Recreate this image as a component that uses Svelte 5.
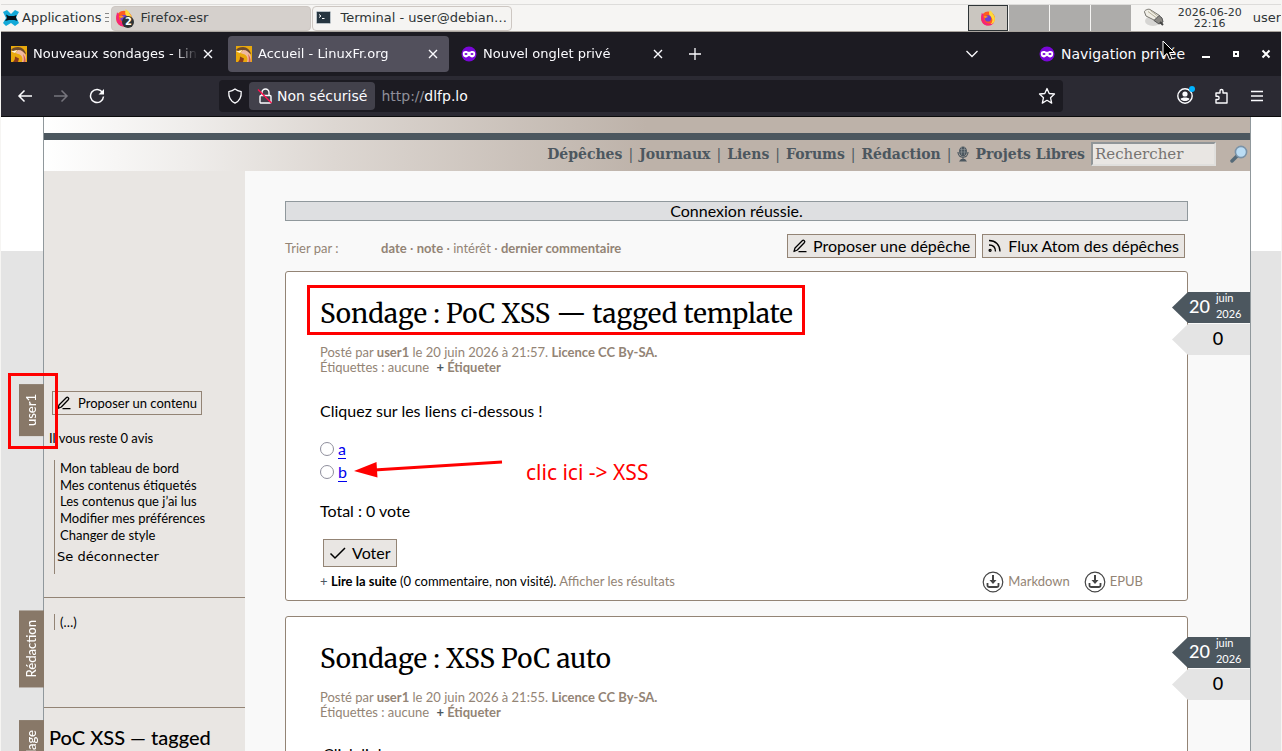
<script>
  const navLinks = ['Dépêches', 'Journaux', 'Liens', 'Forums', 'Rédaction'];
  const sortLinks = [
    { label: 'date', bold: true },
    { label: 'note', bold: true },
    { label: 'intérêt', bold: false },
    { label: 'dernier commentaire', bold: true },
  ];
  const userLinks = [
    'Mon tableau de bord',
    'Mes contenus étiquetés',
    'Les contenus que j’ai lus',
    'Modifier mes préférences',
    'Changer de style',
  ];
  const polls = [
    { id: 1, title: 'PoC XSS — tagged template', time: '21:57', body: 'Cliquez sur les liens ci-dessous\u202f!', lead: false },
    { id: 2, title: 'XSS PoC auto', time: '21:55', body: 'Click link', lead: true },
  ];
  const tabs = [
    { title: 'Nouveaux sondages - LinuxFr.org', icon: 'gnu', active: false },
    { title: 'Accueil - LinuxFr.org', icon: 'gnu', active: true },
    { title: 'Nouvel onglet privé', icon: 'mask', active: false },
  ];
</script>

{#snippet firefox(size)}
  <svg width={size} height={size} viewBox="0 0 16 16" aria-hidden="true">
    <circle cx="8" cy="8.6" r="7" fill="#ff5a1f" />
    <path d="M1.200 6C.6 11 3 15.600 8 15.600c3 0 5-1.400 6.200-3.400-3 2-7 1.600-9-.8C3.600 9.500 3 7 3.600 4.600 2.600 4 2 3 1.800 2.800z" fill="#f5247a" />
    <path d="M9.500.2C12 1.500 12.800 3 13 4.200c1.600 1.300 2.300 4 1.800 6.200C14 13 12 14 10.500 14c2-1.500 2.500-4.500 1-6.500C10 6 8.200 4.500 9.500.2z" fill="#ffd93b" />
    <circle cx="8" cy="8.400" r="3.100" fill="#6b3fd6" />
    <path d="M3.500 6.500C5 5.500 7 5.800 8 7c-1.200.1-2 .6-2.500 1.200z" fill="#ff9b1a" />
  </svg>
{/snippet}

{#snippet gnu()}
  <svg width="16" height="16" viewBox="0 0 16 16" aria-hidden="true">
    <rect width="16" height="16" fill="#e9a90c" />
    <path d="M0 4c1-2 4-3 7-3 4 0 7 3 8 7l-3-1C9 4 5 3.500 2.500 5z" fill="#6d4a2c" />
    <path d="M7 4c4 0 6 2 7.500 5 .8 2.500.5 5 0 7H11c1-3 .5-5-1-6.500C8.500 8 6 8 4.500 7z" fill="#f0b9a0" />
    <path d="M0 5.500 6.500 4 4 7z" fill="#fff2d8" />
    <path d="M4 10.500l4 2-1 3.500H2c1.500-1.500 2-3 2-5.500z" fill="#8a3b1c" />
    <path d="M12 8c2 2 3 5 2.500 8h-2c.5-3 .3-5-.5-8z" fill="#d6604f" />
  </svg>
{/snippet}

{#snippet mask()}
  <svg width="16" height="16" viewBox="0 0 16 16" aria-hidden="true">
    <circle cx="8" cy="8" r="7.500" fill="#7a07d8" />
    <path d="M1.800 7.800C1.800 5.700 3 5 4.600 5c1.500 0 2.400.8 3.400.8S9.900 5 11.400 5c1.600 0 2.800.7 2.800 2.800 0 2.200-1.300 3.600-3 3.600-1.600 0-2.200-1.500-3.200-1.500s-1.600 1.500-3.200 1.500c-1.700 0-3-1.400-3-3.600z" fill="#fff" />
    <ellipse cx="5" cy="8" rx="1.500" ry="1.100" fill="#7a07d8" />
    <ellipse cx="11" cy="8" rx="1.500" ry="1.100" fill="#7a07d8" />
  </svg>
{/snippet}

{#snippet pen()}
  <svg width="16" height="16" viewBox="0 0 16 16" fill="none" stroke="#000" stroke-width="1.300" stroke-linejoin="round" stroke-linecap="round" aria-hidden="true">
    <path d="M2 13.500 3 10 10.500 2.500c1-1 3 .8 2 2L5.300 12z M7 13.700h7" />
  </svg>
{/snippet}

{#snippet download()}
  <svg width="22" height="22" viewBox="0 0 22 22" fill="none" stroke="#444" aria-hidden="true">
    <circle cx="11" cy="11" r="9.800" stroke-width="1.200" />
    <path d="M11 4v6" stroke-width="2" />
    <path d="M7.500 9h7L11 13z" fill="#444" stroke="none" />
    <path d="M5.500 12v2.200c0 1.200.6 1.800 1.800 1.800h7.400c1.200 0 1.800-.6 1.800-1.800V12" stroke-width="1.800" />
  </svg>
{/snippet}

{#snippet meta(time)}
  <p class="meta">
    Posté par <a href="#user">user1</a> le 20 juin 2026 à {time}. <a href="#licence">Licence CC By‑SA.</a><br />
    Étiquettes : aucune <a class="tag-add" href="#tag"><span>+</span> Étiqueter</a>
  </p>
{/snippet}

<div class="desktop">
  <header class="panel">
    <button class="apps">
      <svg width="16" height="16" viewBox="0 0 16 16" aria-hidden="true">
        <path d="M0 2 4 0l4 4 4-4 4 2-3 5 3 6-4 3-4-3-5 3-3-3 3-5z" fill="#12a9d8" />
        <path d="M3 4.500 6 6h5l2.500-1L13 8l1.500 3-3-1H6l-4 1 2-3z" fill="#071018" />
      </svg>
      Applications
    </button>
    <span class="handle"></span>
    <button class="task pressed">
      <span class="task-icon">{@render firefox(18)}<b class="count">2</b></span>
      Firefox-esr
    </button>
    <button class="task">
      <svg width="16" height="16" viewBox="0 0 16 16" aria-hidden="true">
        <rect x=".5" y="1.500" width="14" height="12" rx="1" fill="#263540" stroke="#b9c1c6" />
        <path d="M3 4.500l2 1.500-2 1.500M6 8.500h2.500" stroke="#fff" fill="none" />
      </svg>
      <span class="task-label">Terminal - user@debian…</span>
    </button>
    <div class="workspaces">
      <button class="current" aria-label="Espace 1">{@render firefox(16)}</button>
      <button aria-label="Espace 2"></button>
      <button aria-label="Espace 3"></button>
      <button aria-label="Espace 4"></button>
    </div>
    <svg class="tray" width="22" height="20" viewBox="0 0 22 20" aria-hidden="true">
      <ellipse cx="10" cy="13" rx="8" ry="5" fill="#d6d5d3" />
      <path d="M1.500 4C1 2.500 5 .5 7 1.500l9.500 6L12 12.500 3 8z" fill="#f0eee6" stroke="#77756f" />
      <path d="M5 3.500l8 6M7.500 2.500l7 5.500" stroke="#b5b09a" />
      <path d="M11 12.500l5-5 3 2.500 1 4-4 2z" fill="#8b8984" stroke="#555" />
      <path d="M17 14l3 3" stroke="#444" stroke-width="2" />
    </svg>
    <time class="clock">2026-06-20<br />22:16</time>
    <span class="session">user</span>
  </header>

  <div class="tabbar">
    {#each tabs as tab}
      <div class="tab" class:active={tab.active}>
        {#if tab.icon === 'gnu'}{@render gnu()}{:else}{@render mask()}{/if}
        <span class="tab-title">{tab.title}</span>
        <button class="close" aria-label="Fermer">
          <svg width="10" height="10" viewBox="0 0 10 10" stroke="#fbfbfe" stroke-width="1.400"><path d="M1 1l8 8M9 1l-8 8" /></svg>
        </button>
      </div>
    {/each}
    <button class="new-tab" aria-label="Nouvel onglet">
      <svg width="14" height="14" viewBox="0 0 14 14" stroke="#fbfbfe" stroke-width="1.300"><path d="M7 1v12M1 7h12" /></svg>
    </button>
    <button class="all-tabs" aria-label="Lister les onglets">
      <svg width="14" height="14" viewBox="0 0 14 14" stroke="#fbfbfe" stroke-width="1.300" fill="none"><path d="M1.500 4 7 9.500 12.500 4" /></svg>
    </button>
    <span class="private">{@render mask()} Navigation privée</span>
    <div class="window-controls">
      <button aria-label="Réduire"><svg width="10" height="10" viewBox="0 0 10 10"><path d="M1 7h8v2H1z" fill="#fff" /></svg></button>
      <button aria-label="Agrandir"><svg width="10" height="10" viewBox="0 0 10 10"><path d="M3 3h4v4H3z" stroke="#fff" stroke-width="2" fill="none" /></svg></button>
      <button aria-label="Fermer la fenêtre"><svg width="10" height="10" viewBox="0 0 10 10"><path d="M1.500 1.500l7 7M8.500 1.500l-7 7" stroke="#fff" stroke-width="2" /></svg></button>
    </div>
    <svg class="pointer" width="14" height="22" viewBox="0 0 14 22" aria-hidden="true">
      <path d="M1 1v16l4-3.500 2.500 6 2.500-1-2.500-6h5z" fill="#000" stroke="#fff" />
    </svg>
  </div>

  <div class="toolbar">
    <button aria-label="Reculer"><svg width="16" height="16" viewBox="0 0 16 16" fill="none" stroke="#fbfbfe" stroke-width="1.500"><path d="M15 8H2M7.500 2.500 2 8l5.500 5.500" /></svg></button>
    <button aria-label="Avancer" disabled><svg width="16" height="16" viewBox="0 0 16 16" fill="none" stroke="#76757d" stroke-width="1.500"><path d="M1 8h13M8.500 2.500 14 8l-5.500 5.500" /></svg></button>
    <button aria-label="Actualiser"><svg width="16" height="16" viewBox="0 0 16 16" fill="none" stroke="#fbfbfe" stroke-width="1.500"><path d="M13.500 4.500A6.500 6.500 0 1 0 14.500 8.500" /><path d="M15 1v5.500H9.500z" fill="#fbfbfe" stroke="none" /></svg></button>
    <div class="urlbar">
      <span class="shield"><svg width="16" height="16" viewBox="0 0 16 16" fill="none" stroke="#fbfbfe" stroke-width="1.300" stroke-linejoin="round"><path d="M8 1c2 1.600 4 2.200 6.200 2.600C14.600 9 12.500 13 8 15.200 3.500 13 1.400 9 1.800 3.600 4 3.200 6 2.600 8 1z" /></svg></span>
      <button class="identity">
        <svg width="16" height="16" viewBox="0 0 16 16" fill="none" stroke="#fbfbfe" stroke-width="1.400"><rect x="3" y="7.500" width="11" height="7.500" rx="1" /><path d="M5 7.500V4.500a3.500 3.500 0 0 1 7 0v3" /><path d="M1 1.500 14.500 15" stroke="#ff0f4d" stroke-width="1.500" /></svg>
        Non sécurisé
      </button>
      <span class="url"><i>http://</i>dlfp.lo</span>
      <button class="star" aria-label="Marque-page"><svg width="18" height="18" viewBox="0 0 18 18" fill="none" stroke="#fbfbfe" stroke-width="1.300" stroke-linejoin="round"><path d="M9 1.500l2.200 5 5.300.5-4 3.700 1.200 5.400L9 13.300l-4.700 2.800 1.200-5.400-4-3.700 5.300-.5z" /></svg></button>
    </div>
    <button class="account" aria-label="Compte"><svg width="20" height="20" viewBox="0 0 20 20" fill="none" stroke="#fbfbfe" stroke-width="1.400"><circle cx="10" cy="10" r="7.200" /><circle cx="10" cy="8" r="2.600" fill="#fbfbfe" stroke="none" /><path d="M5.500 13c1-2 8-2 9 0-2 2.800-7 2.800-9 0z" fill="#fbfbfe" stroke="none" /><circle cx="17" cy="3" r="3" fill="#00b3ff" stroke="none" /></svg></button>
    <button aria-label="Extensions"><svg width="16" height="16" viewBox="0 0 16 16" fill="none" stroke="#fbfbfe" stroke-width="1.400" stroke-linejoin="round"><path d="M3 5h4V3a1.500 1.500 0 0 1 3 0v2h4v10H3v-3.500h1.500a1.600 1.600 0 0 0 0-3.200H3z" /></svg></button>
    <button aria-label="Menu"><svg width="14" height="14" viewBox="0 0 14 14" stroke="#fbfbfe" stroke-width="1.300"><path d="M1 2.500h12M1 7h12M1 11.500h12" /></svg></button>
  </div>

  <div class="viewport">
    <div class="site">
      <div class="banner"></div>
      <nav class="site-nav">
        {#each navLinks as link}
          <a href="#nav">{link}</a><span>|</span>
        {/each}
        <a class="projects" href="#nav">
          <svg width="12" height="16" viewBox="0 0 12 16" aria-hidden="true">
            <ellipse cx="6" cy="5.500" rx="4" ry="5" fill="#4c575f" />
            <path d="M3 3.500h6M2.500 6h7M4.500 1v8M7.500 1v8" stroke="#9aa0a2" stroke-width=".5" />
            <path d="M1 6c0 7 10 7 10 0M6 11v3" fill="none" stroke="#4c575f" stroke-width="1.200" />
            <path d="M2 15.500 4 13h4l2 2.500z" fill="#4c575f" />
          </svg>
          Projets Libres</a>
        <input type="search" placeholder="Rechercher" aria-label="Rechercher" />
        <button class="search" aria-label="Lancer la recherche">
          <svg width="18" height="18" viewBox="0 0 18 18"><path d="M2 16l5-5" stroke="#566a78" stroke-width="3.500" stroke-linecap="round" /><circle cx="11" cy="7" r="5.600" fill="#bbddf5" stroke="#7b93a8" stroke-width="1.600" /></svg>
        </button>
      </nav>

      <div class="columns">
        <aside>
          <section class="user-box">
            <h2 class="side-tab">user1</h2>
            <a class="btn small" href="#new">{@render pen()} Proposer un contenu</a>
            <p class="votes">Il vous reste 0 avis</p>
            <div class="menu">
              <ul>
                {#each userLinks as link}<li><a href="#me">{link}</a></li>{/each}
              </ul>
              <button class="logout">Se déconnecter</button>
            </div>
          </section>
          <section class="redaction-box">
            <h2 class="side-tab">Rédaction</h2>
            <p class="ellipsis"><a href="#more">(…)</a></p>
          </section>
          <section class="poll-box">
            <h2 class="side-tab">Sondage</h2>
            <p class="poll-title">PoC XSS — tagged template</p>
          </section>
        </aside>

        <main>
          <p class="notice">Connexion réussie.</p>
          <div class="sort-row">
            <span class="sort-label">Trier par :</span>
            <span class="sort-links">
              {#each sortLinks as s, i}{i ? ' · ' : ''}<a href="#sort" class:bold={s.bold}>{s.label}</a>{/each}
            </span>
            <a class="btn" href="#new">{@render pen()} Proposer une dépêche</a>
            <a class="btn" href="#atom">
              <svg width="16" height="14" viewBox="0 0 16 14" fill="none" stroke="#000" stroke-width="1.300" aria-hidden="true"><path d="M2 1.500c6.500 0 11 4.500 11 11M2 6c4 0 6.500 2.500 6.500 6.500" /><circle cx="3.100" cy="11.300" r="1" /></svg>
              Flux Atom des dépêches</a>
          </div>

          {#each polls as poll}
            <article>
              <div class="badges">
                <div class="date"><b>20</b><span>juin<br />2026</span></div>
                <div class="score">0</div>
              </div>
              <h1><a href="#poll">Sondage : {poll.title}</a></h1>
              {@render meta(poll.time)}
              <p class="body" class:lead={poll.lead}>{poll.body}</p>
              <form>
                {#each ['a', 'b'] as answer}
                  <div class="answer">
                    <input type="radio" name="poll{poll.id}" id="p{poll.id}{answer}" aria-label={answer} />
                    <label for="p{poll.id}{answer}"><a href="#answer">{answer}</a></label>
                  </div>
                {/each}
                <p class="total">Total&#8239;: 0 vote</p>
                <button type="button" class="vote">
                  <svg width="18" height="16" viewBox="0 0 18 16" fill="none" stroke="#000" stroke-width="1.500" aria-hidden="true"><path d="M1.500 8.500 6 13 16 3" /></svg>
                  Voter
                </button>
              </form>
              <footer>
                <span class="more"><i>+</i> <a href="#read"><b>Lire la suite</b> (0 commentaire, non visité).</a> <a class="soft" href="#results">Afficher les résultats</a></span>
                <a class="soft file" href="#md">{@render download()} Markdown</a>
                <a class="soft file" href="#epub">{@render download()} EPUB</a>
              </footer>
            </article>
          {/each}
        </main>
      </div>
    </div>

    <div class="mark mark-user"></div>
    <div class="mark mark-title"></div>
    <svg class="arrow" width="150" height="24" viewBox="0 0 150 24" aria-hidden="true">
      <path d="M20 13 148 5" stroke="#f00" stroke-width="3" />
      <path d="M0 14 22.500 5l1 15.500z" fill="#f00" />
    </svg>
    <span class="hint">clic ici -&gt; XSS</span>
  </div>
</div>

<style>
  :global(body) { background: #f6f5f3; }
  .desktop {
    display: flex; flex-direction: column; height: 100vh; padding: 0 1px; box-sizing: border-box;
    overflow: hidden; font: 13px/16px "DejaVu Sans", sans-serif;
  }
  .desktop :is(h1, h2, p, ul, form) { margin: 0; padding: 0; }
  button { border: 0; background: none; padding: 0; font: inherit; color: inherit; }
  a { color: inherit; text-decoration: none; }
  svg { flex: none; }

  .panel {
    display: flex; align-items: center; flex: none; height: 26px; margin-top: 4px;
    border-top: 1px solid #dddcda; border-bottom: 1px solid #a9a49e; background: #f6f5f3;
    color: #2e3436; overflow: hidden; white-space: nowrap;
  }
  .apps { display: flex; align-items: center; gap: 3px; padding-left: 2px; }
  .handle { flex: none; width: 4px; height: 10px; margin: 0 2px 0 4px; background: repeating-linear-gradient(#888 0 1px, transparent 1px 4px); }
  .task {
    display: flex; align-items: center; gap: 8px; flex: 0 1 200px; height: 25px; min-width: 0; margin-right: 1px; padding: 0 3px;
    box-sizing: border-box; border: 1px solid #cdc7c2; border-radius: 4px; background: #f5f4f2;
  }
  .task.pressed { background: #d5d0cc; gap: 4px; }
  .task-label { overflow: hidden; }
  .task-icon { position: relative; display: flex; width: 21px; }
  .count {
    position: absolute; left: 7px; top: 7px; width: 12px; height: 12px; border-radius: 6px; background: #2e3436; color: #fff;
    font-size: 10px; line-height: 12px; text-align: center;
  }
  .workspaces { display: flex; gap: 1px; margin-left: auto; height: 26px; }
  .workspaces button { width: 40px; background: #adacaa; }
  .workspaces .current { display: grid; place-items: center; box-sizing: border-box; border: 1px solid #2e3436; background: #cac6c0; }
  .tray { margin: 0 13px 0 12px; }
  .clock { font-size: 11px; line-height: 11px; text-align: center; }
  .session { padding-left: 11px; }

  .tabbar {
    position: relative; display: flex; align-items: center; flex: none; gap: 4px; height: 44px; padding-left: 2px;
    background: #1c1b22; color: #fbfbfe; font-size: 13px; white-space: nowrap;
  }
  .tab { display: flex; align-items: center; gap: 6px; flex: 0 1 221px; height: 36px; padding: 0 8px; box-sizing: border-box; border-radius: 4px; min-width: 0; }
  .tab.active { background: #52505c; }
  .tab-title { flex: 1; overflow: hidden; mask-image: linear-gradient(to left, transparent, #000 24px); }
  .close { display: grid; place-items: center; width: 16px; height: 16px; margin-left: -4px; }
  .new-tab { display: grid; margin-left: 10px; }
  .all-tabs { display: grid; margin-left: auto; }
  .private { display: flex; align-items: center; gap: 6px; margin-left: 56px; font-size: 14px; }
  .window-controls { display: flex; margin-left: 2px; }
  .window-controls button { display: grid; place-items: center; width: 30px; height: 30px; }
  .pointer { position: absolute; right: 105px; top: 8px; }

  .toolbar {
    display: flex; align-items: center; flex: none; height: 40px; padding: 0 6px; background: #2b2a33; color: #fbfbfe;
    border-bottom: 1px solid #0c0c0d; font-size: 14px;
  }
  .toolbar > button { display: grid; place-items: center; width: 36px; height: 32px; }
  .urlbar { display: flex; align-items: center; flex: 1; height: 32px; margin: 0 104px; border-radius: 4px; background: #1c1b22; }
  .shield { display: grid; place-items: center; width: 30px; padding-left: 1px; box-sizing: border-box; }
  .identity { display: flex; align-items: center; gap: 4px; height: 28px; padding: 0 8px; border-radius: 4px; background: #42414b; white-space: nowrap; }
  .url { flex: 1; padding-left: 6px; }
  .url i { font-style: normal; color: #8f8f99; }
  .star { display: grid; margin-right: 7px; }

  .viewport {
    position: relative; flex: 1; min-height: 0; overflow: hidden; color: #000;
    background: linear-gradient(#fff 134px, #e4e4e4 134px); font-family: Lato, Carlito, sans-serif;
  }
  .site {
    min-height: 100%; margin: 0 30px 0 42px; border: solid #90989c; border-width: 0 1px; background: #f9f9f9;
  }
  .banner {
    height: 16px; border-bottom: 7px solid #4c575f;
    background: linear-gradient(to right, #fff, #efedeb 12%, #ddd7d2 24%, #bdb2a9 50%); background-clip: padding-box;
  }
  .site-nav {
    display: flex; align-items: center; justify-content: flex-end; gap: 6px; height: 31px; padding-bottom: 3px; box-sizing: border-box;
    background: linear-gradient(to right, #fff, #efedeb 12%, #ddd7d2 24%, #bdb2a9 50%);
    color: #4c575f; font: 14px/18px "DejaVu Serif", serif; white-space: nowrap;
  }
  .site-nav a { font-weight: bold; }
  .projects { display: flex; align-items: center; gap: 6px; }
  .site-nav input {
    width: 125px; height: 24px; box-sizing: border-box; padding: 0 2px; border: 2px solid;
    border-color: #909598 #e0dfdd #e0dfdd #909598; background: #e9e6e3; font: inherit; font-size: 15px; appearance: none;
  }
  .site-nav input::placeholder { color: #767371; opacity: 1; }
  .search { display: grid; margin: 0 2px 0 8px; }

  .columns { display: flex; align-items: stretch; }
  aside { flex: none; width: 201px; padding-top: 201px; box-sizing: border-box; background: #e9e6e3; font-size: 13px; }
  aside section { position: relative; box-sizing: border-box; padding-left: 5px; border-bottom: 1px solid #938475; }
  .side-tab {
    position: absolute; right: 100%; top: 12px; width: 25px; box-sizing: border-box;
    display: flex; align-items: center; justify-content: center; writing-mode: vertical-rl; rotate: 180deg;
    background: #887868; color: #fff; font-size: 13px; font-weight: 500; line-height: 16px;
  }
  .desktop .side-tab { padding: 10px 0 10px 2px; }
  .user-box { min-height: 226px; padding-top: 19px; }
  .btn {
    display: inline-flex; align-items: center; gap: 5px; height: 24px; padding: 0 5px 0 4px; box-sizing: border-box;
    border: 1px solid #938475; background: #e9e6e3; font-size: 16px; white-space: nowrap;
  }
  .btn.small { margin-left: 3px; font-size: 13px; gap: 6px; padding: 0 4px 0 3px; }
  .desktop .votes { margin-top: 15px; }
  .menu { margin: 14px 0 0 5px; border-left: 1px solid #938475; padding-bottom: 9px; }
  .menu ul { display: grid; grid-auto-rows: 1fr; align-items: center; height: 83px; list-style: none; }
  .desktop .menu ul { padding-left: 5px; }
  .logout { display: block; margin: 6px 0 0 2px; font-family: "DejaVu Sans", sans-serif; }
  .redaction-box { min-height: 110px; padding-top: 16px; }
  .desktop .ellipsis { margin-left: 5px; padding-left: 5px; border-left: 1px solid #938475; }
  .poll-box { min-height: 120px; padding-top: 16px; }
  .poll-box .poll-title { font-size: 20px; font-weight: 500; line-height: 27px; }

  main { flex: 1; min-width: 0; padding: 30px 62px 0 40px; }
  .notice { height: 18px; border: 1px solid #90989c; background: #dedfe1; font-size: 16px; line-height: 18px; text-align: center; }
  .sort-row { display: flex; align-items: center; gap: 6px; margin: 13px 3px 13px 0; color: #938475; font-size: 13px; }
  .sort-row .btn { color: #000; }
  .sort-row span { padding-top: 4px; }
  .sort-label { width: 90px; }
  .sort-links { margin-right: auto; }
  .bold, .meta a { font-weight: bold; }

  article { position: relative; margin-bottom: 15px; padding: 22px 34px 8px; border: 1px solid #938475; border-radius: 3px; background: #fff; font-size: 16px; line-height: 20px; }
  h1 { font: 26px/40px Merriweather, "DejaVu Serif Condensed", "DejaVu Serif", serif; }
  article .meta { margin-top: 11px; color: #938475; font-size: 13px; line-height: 15px; }
  .tag-add { margin-left: 4px; }
  .tag-add span { color: #4c575f; }
  article .body { margin: 26px 0 17px; }
  article .lead { padding-left: 3px; line-height: 16px; }
  .answer { display: flex; align-items: center; gap: 4px; height: 23px; }
  .answer input { appearance: none; width: 14px; height: 14px; margin: 0 0 2px; box-sizing: border-box; border: 1px solid #8f8f9d; border-radius: 50%; background: #fff; }
  .answer a { display: block; line-height: 18px; border-bottom: 1px solid #00e; color: #00e; }
  article .total { margin: 17px 0 18px; }
  .vote { display: flex; align-items: center; gap: 5px; height: 28px; margin-left: 3px; padding: 0 5px; box-sizing: border-box; border: 1px solid #938475; background: #e9e6e3; }
  footer { display: flex; align-items: center; gap: 14px; margin: 4px 10px 0 0; font-size: 13px; line-height: 21px; }
  .more { margin-right: auto; }
  .more i { font-style: normal; color: #4c575f; }
  .soft { color: #938475; }
  .file { display: flex; align-items: center; gap: 4px; height: 21px; }

  .badges { position: absolute; top: 20px; right: -63px; width: 78px; display: grid; gap: 1px; }
  .date, .score { display: flex; height: 31px; box-sizing: border-box; clip-path: polygon(16px 0, 100% 0, 100% 100%, 16px 100%, 0 50%); }
  .date { gap: 6px; padding-left: 17px; background: #4c575f; color: #fff; }
  .date b { font-size: 18px; font-weight: 500; line-height: 29px; }
  .date span { font-size: 11px; line-height: 16px; margin-top: -2px; }
  .score { justify-content: center; padding-left: 14px; background: #e4e4e4; font-size: 18px; font-weight: 500; line-height: 29px; }

  .mark { position: absolute; box-sizing: border-box; border: 3px solid #f00; }
  .mark-user { left: 7px; top: 256px; width: 50px; height: 76px; }
  .mark-title { left: 306px; top: 168px; width: 498px; height: 50px; }
  .arrow { position: absolute; left: 353px; top: 340px; }
  .hint { position: absolute; left: 525px; top: 341px; color: #f00; font: 21px/28px "Noto Sans", sans-serif; white-space: nowrap; }
</style>
